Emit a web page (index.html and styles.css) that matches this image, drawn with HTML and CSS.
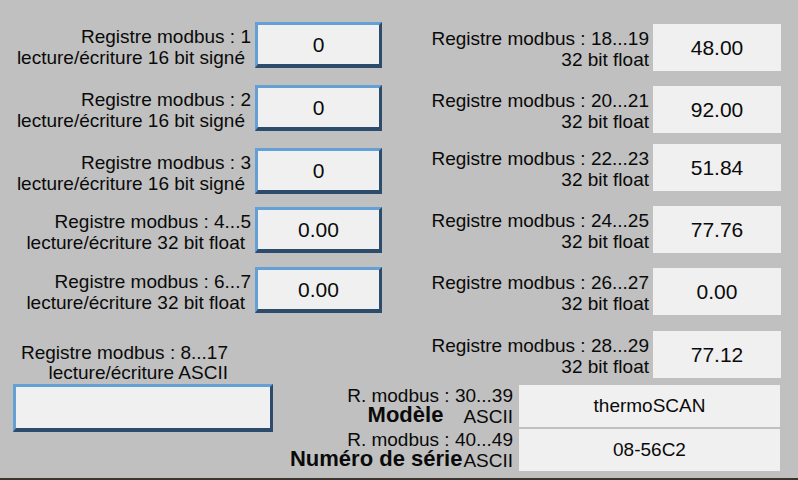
FILE: index.html
```html
<!DOCTYPE html>
<html lang="fr">
<head>
<meta charset="utf-8">
<title>Registres modbus</title>
<link rel="stylesheet" href="styles.css">
</head>
<body>
<div class="screen">
  <div class="top">
    <div class="col col-left">
      <div class="row">
        <div class="lbl"><div>Registre modbus : 1</div><div class="trail">lecture/écriture 16 bit signé</div></div>
        <div class="box bevel">0</div>
      </div>
      <div class="row">
        <div class="lbl"><div>Registre modbus : 2</div><div class="trail">lecture/écriture 16 bit signé</div></div>
        <div class="box bevel">0</div>
      </div>
      <div class="row">
        <div class="lbl"><div>Registre modbus : 3</div><div class="trail">lecture/écriture 16 bit signé</div></div>
        <div class="box bevel">0</div>
      </div>
      <div class="row">
        <div class="lbl"><div>Registre modbus : 4...5</div><div class="trail">lecture/écriture 32 bit float</div></div>
        <div class="box bevel">0.00</div>
      </div>
      <div class="row">
        <div class="lbl"><div>Registre modbus : 6...7</div><div class="trail">lecture/écriture 32 bit float</div></div>
        <div class="box bevel">0.00</div>
      </div>
      <div class="ascii-lbl"><div>Registre modbus : 8...17</div><div>lecture/écriture ASCII</div></div>
    </div>
    <div class="col col-right">
      <div class="row">
        <div class="lbl"><div>Registre modbus : 18...19</div><div>32 bit float</div></div>
        <div class="box flat">48.00</div>
      </div>
      <div class="row">
        <div class="lbl"><div>Registre modbus : 20...21</div><div>32 bit float</div></div>
        <div class="box flat">92.00</div>
      </div>
      <div class="row">
        <div class="lbl"><div>Registre modbus : 22...23</div><div>32 bit float</div></div>
        <div class="box flat">51.84</div>
      </div>
      <div class="row">
        <div class="lbl"><div>Registre modbus : 24...25</div><div>32 bit float</div></div>
        <div class="box flat">77.76</div>
      </div>
      <div class="row">
        <div class="lbl"><div>Registre modbus : 26...27</div><div>32 bit float</div></div>
        <div class="box flat">0.00</div>
      </div>
      <div class="row">
        <div class="lbl"><div>Registre modbus : 28...29</div><div>32 bit float</div></div>
        <div class="box flat">77.12</div>
      </div>
    </div>
  </div>
  <div class="bottom">
    <div class="box bevel ascii-box"></div>
    <div class="info">
      <div class="info-row">
        <div class="info-lbl">
          <div>R. modbus : 30...39</div>
          <div class="info-line2"><span class="name name-model">Modèle</span><span>ASCII</span></div>
        </div>
        <div class="info-box">thermoSCAN</div>
      </div>
      <div class="info-row">
        <div class="info-lbl">
          <div>R. modbus : 40...49</div>
          <div class="info-line2"><span class="name name-serial">Numéro de série</span><span>ASCII</span></div>
        </div>
        <div class="info-box">08-56C2</div>
      </div>
    </div>
  </div>
  <div class="strip"></div>
</div>
</body>
</html>
```

FILE: styles.css
```css
* { box-sizing: border-box; }
html, body { margin: 0; padding: 0; }
body {
  font-family: "Liberation Sans", Arial, sans-serif;
  font-size: 19px;
  color: #0a0a0a;
  background: #c0c0c0;
}
.screen {
  width: 798px;
  height: 480px;
  background: #c0c0c0;
  display: flex;
  flex-direction: column;
  overflow: hidden;
}
.top {
  height: 384px;
  display: flex;
}
.col { display: flex; flex-direction: column; }
.col-left { width: 382px; }
.col-right { flex: 1; margin-left: 18px; margin-right: 17px; }
.row {
  display: flex;
  align-items: center;
  height: 46px;
}
.col-right .row { height: 47px; }
.lbl {
  flex: 1;
  text-align: right;
  line-height: 21px;
  white-space: nowrap;
}
.col-left .lbl { padding-right: 4px; padding-top: 4px; }
.col-left .trail { padding-right: 6px; }
.col-right .lbl { padding-right: 4px; padding-top: 3px; }
.box {
  display: flex;
  align-items: center;
  justify-content: center;
  background: #f0f0f0;
  font-size: 21px;
}
.bevel {
  width: 127px;
  height: 46px;
  border-style: solid;
  border-width: 3px 3px 4px 3px;
  border-color: #64a0d6 #2d4b6a #2d4b6a #64a0d6;
}
.flat { width: 128px; height: 47px; }

.col-left .row:nth-child(1) { margin-top: 22px; }
.col-left .row:nth-child(2) { margin-top: 17px; }
.col-left .row:nth-child(3) { margin-top: 17px; }
.col-left .row:nth-child(4) { margin-top: 13px; }
.col-left .row:nth-child(5) { margin-top: 14px; }
.col-right .row:nth-child(1) { margin-top: 24px; }
.col-right .row:nth-child(2) { margin-top: 15px; }
.col-right .row:nth-child(3) { margin-top: 11px; }
.col-right .row:nth-child(4) { margin-top: 15px; }
.col-right .row:nth-child(5) { margin-top: 15px; }
.col-right .row:nth-child(6) { margin-top: 16px; }

.ascii-lbl {
  margin-top: 30px;
  width: 228px;
  text-align: right;
  line-height: 20px;
  white-space: nowrap;
}

.bottom {
  flex: 1;
  display: flex;
  align-items: flex-start;
  padding-left: 13px;
}
.ascii-box { width: 260px; height: 48px; }
.info {
  margin-left: auto;
  margin-right: 18px;
  margin-top: 1px;
  display: flex;
  flex-direction: column;
  gap: 2px;
}
.info-row {
  display: flex;
  height: 42px;
}
.info-lbl {
  flex: 1;
  text-align: right;
  line-height: 21px;
  white-space: nowrap;
  padding-right: 6px;
}
.info-line2 {
  display: flex;
  justify-content: flex-end;
  align-items: flex-start;
}
.name {
  font-weight: bold;
  font-size: 22px;
  line-height: 18px;
}
.name-model { margin-right: 20px; }
.name-serial { margin-right: 1px; }
.info-box {
  width: 261px;
  background: #f0f0f0;
  display: flex;
  align-items: center;
  justify-content: center;
}
.strip {
  height: 2px;
  background: #3a342e;
}
```
